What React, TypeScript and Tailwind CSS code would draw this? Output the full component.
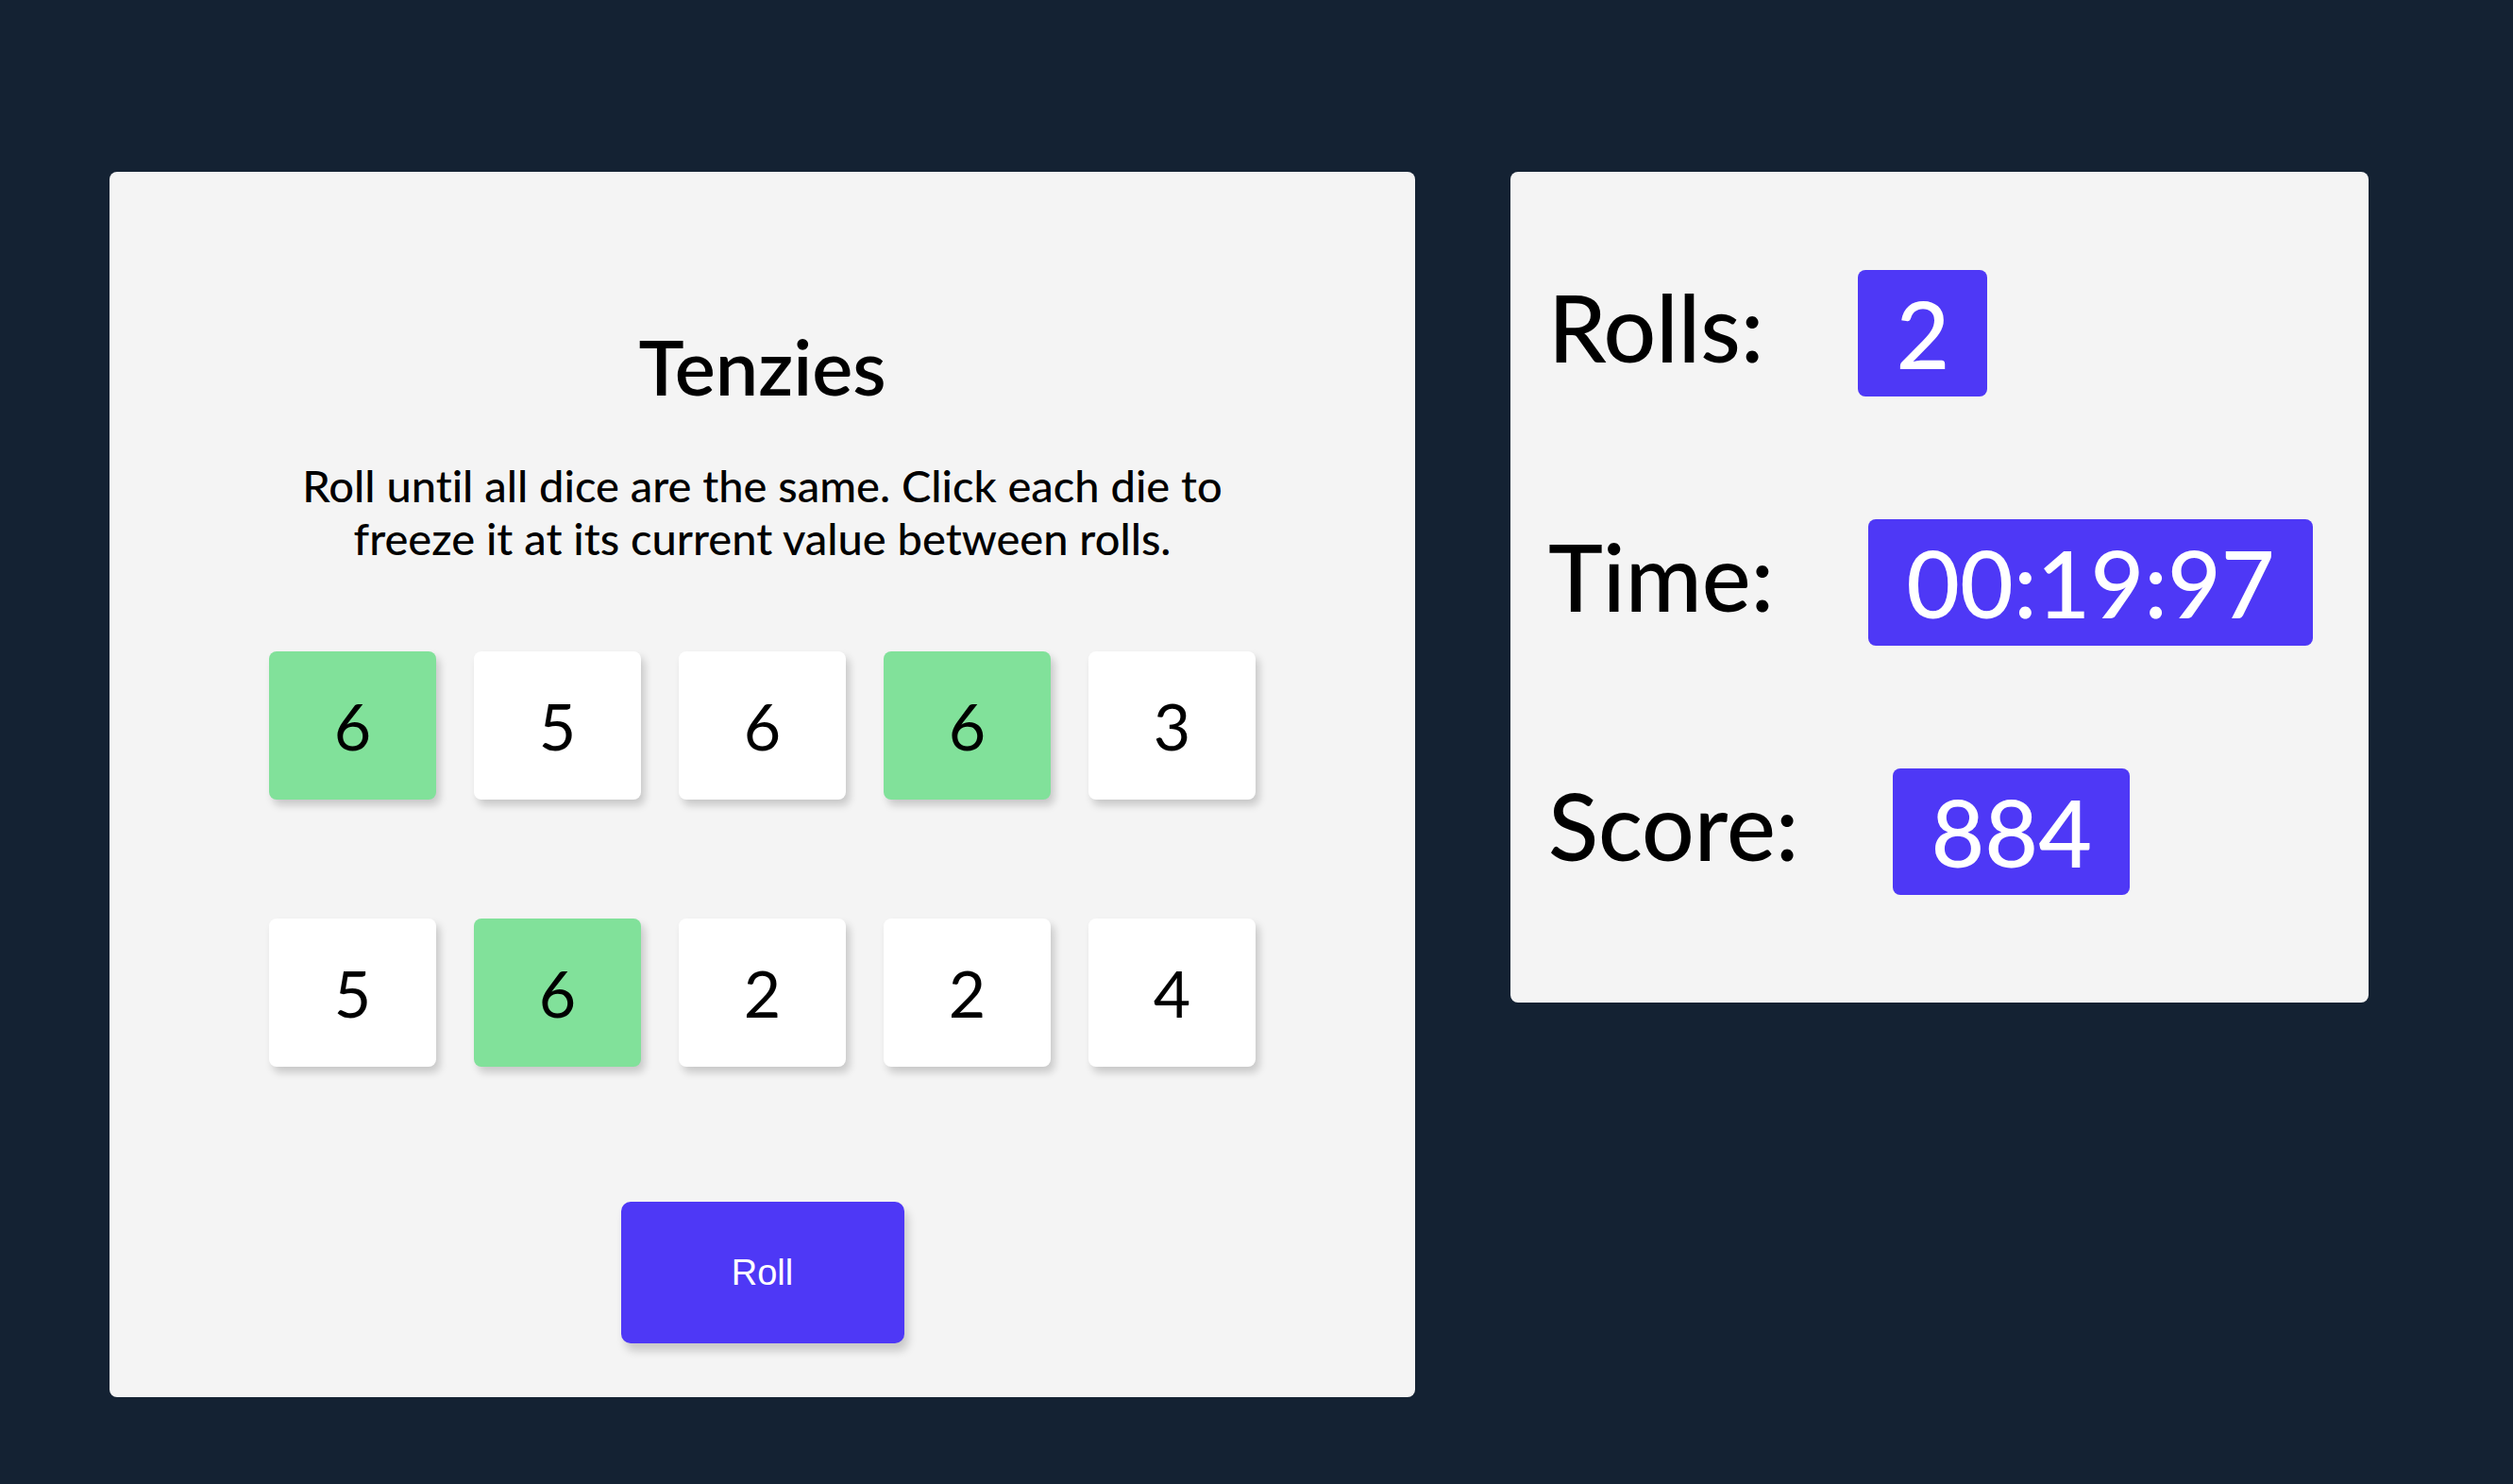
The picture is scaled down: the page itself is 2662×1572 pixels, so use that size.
const dice = [
  { value: 6, held: true },
  { value: 5, held: false },
  { value: 6, held: false },
  { value: 6, held: true },
  { value: 3, held: false },
  { value: 5, held: false },
  { value: 6, held: true },
  { value: 2, held: false },
  { value: 2, held: false },
  { value: 4, held: false },
];

const stats = [
  ["Rolls:", "2"],
  ["Time:", "00:19:97"],
  ["Score:", "884"],
];

export default function App() {
  return (
    <main className="min-h-screen bg-[#142233] font-['Lato','Noto_Sans',sans-serif] text-black [font-variant-ligatures:none]">
      <div className="flex items-start gap-[101px] pl-[116px] pt-[182px]">
        <section className="flex w-[1383px] flex-col items-center rounded-[8px] bg-[#f4f4f4] pb-[57px] pt-[157px]">
          <h1 className="text-[81px] font-semibold leading-[98px]">Tenzies</h1>
          <p className="mt-[49px] max-w-[1000px] text-center text-[47px] font-medium leading-[56px]">
            Roll until all dice are the same. Click each die to freeze it at
            its current value between rolls.
          </p>

          <div className="mt-[92px] grid grid-cols-5 gap-x-[40px] gap-y-[126px]">
            {dice.map((die, i) => (
              <button
                key={i}
                className={`flex h-[157px] w-[177px] items-center justify-center rounded-[8px] text-[68px] leading-none shadow-[4px_6px_8px_rgba(0,0,0,0.18)] ${
                  die.held ? "bg-[#81e19a]" : "bg-white"
                }`}
              >
                {die.value}
              </button>
            ))}
          </div>

          <button className="mt-[143px] h-[150px] w-[300px] rounded-[10px] bg-[#4e38f6] font-['Liberation_Sans',Arial,sans-serif] text-[38px] text-white shadow-[4px_8px_10px_rgba(0,0,0,0.18)]">
            Roll
          </button>
        </section>

        <aside className="flex w-[909px] flex-col gap-[130px] rounded-[8px] bg-[#f4f4f4] pb-[114px] pl-[40px] pt-[104px]">
          {stats.map(([label, value]) => (
            <div key={label} className="flex items-start gap-[100px]">
              <span className="text-[98px] font-medium leading-[120px]">{label}</span>
              <span className="rounded-[8px] bg-[#4e38f6] px-[40px] py-[7px] text-[98px] font-medium leading-[120px] text-white">
                {value}
              </span>
            </div>
          ))}
        </aside>
      </div>
    </main>
  );
}
